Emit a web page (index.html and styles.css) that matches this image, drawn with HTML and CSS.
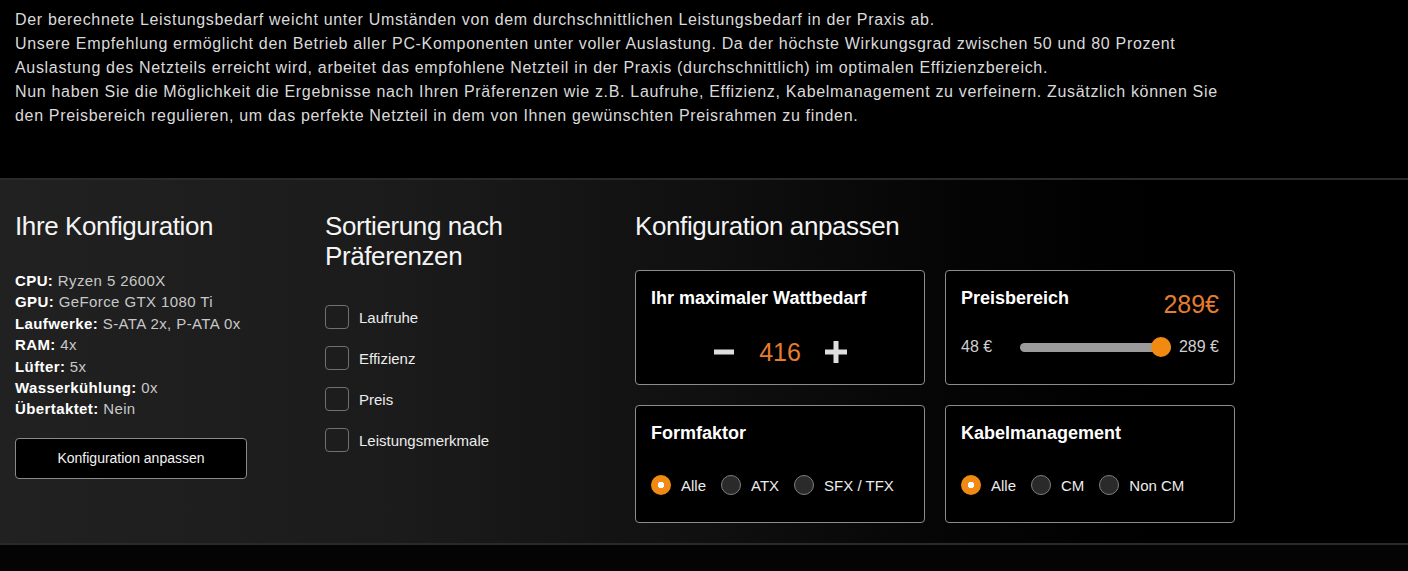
FILE: index.html
```html
<!DOCTYPE html>
<html lang="de">
<head>
    <meta charset="UTF-8">
    <meta name="viewport" content="width=device-width, initial-scale=1.0">
    <title>Netzteil-Konfigurator</title>
    <link rel="stylesheet" href="styles.css">
</head>
<body>
    <div class="intro">
        <p>Der berechnete Leistungsbedarf weicht unter Umständen von dem durchschnittlichen Leistungsbedarf in der Praxis ab.<br>
        Unsere Empfehlung ermöglicht den Betrieb aller PC-Komponenten unter voller Auslastung. Da der höchste Wirkungsgrad zwischen 50 und 80 Prozent<br>
        Auslastung des Netzteils erreicht wird, arbeitet das empfohlene Netzteil in der Praxis (durchschnittlich) im optimalen Effizienzbereich.<br>
        Nun haben Sie die Möglichkeit die Ergebnisse nach Ihren Präferenzen wie z.B. Laufruhe, Effizienz, Kabelmanagement zu verfeinern. Zusätzlich können Sie<br>
        den Preisbereich regulieren, um das perfekte Netzteil in dem von Ihnen gewünschten Preisrahmen zu finden.</p>
    </div>

    <div class="config">
        <div class="row">
            <!-- Ihre Konfiguration -->
            <div class="col col-small">
                <h2>Ihre Konfiguration</h2>
                <ul class="spec-list">
                    <li><b>CPU:</b> Ryzen 5 2600X</li>
                    <li><b>GPU:</b> GeForce GTX 1080 Ti</li>
                    <li><b>Laufwerke:</b> S-ATA 2x, P-ATA 0x</li>
                    <li><b>RAM:</b> 4x</li>
                    <li><b>Lüfter:</b> 5x</li>
                    <li><b>Wasserkühlung:</b> 0x</li>
                    <li><b>Übertaktet:</b> Nein</li>
                </ul>
                <button class="btn-outline">Konfiguration anpassen</button>
            </div>

            <!-- Sortierung -->
            <div class="col col-small">
                <h2>Sortierung nach Präferenzen</h2>
                <div class="check-list">
                    <label class="check"><span class="check-box"></span>Laufruhe</label>
                    <label class="check"><span class="check-box"></span>Effizienz</label>
                    <label class="check"><span class="check-box"></span>Preis</label>
                    <label class="check"><span class="check-box"></span>Leistungsmerkmale</label>
                </div>
            </div>

            <!-- Konfiguration anpassen -->
            <div class="col col-wide">
                <h2>Konfiguration anpassen</h2>
                <div class="cards">
                    <div class="card">
                        <div class="card-title">Ihr maximaler Wattbedarf</div>
                        <div class="stepper">
                            <svg class="step-btn" width="22" height="22" viewBox="0 0 22 22"><rect x="1" y="8.5" width="20" height="5" fill="#dedede"/></svg>
                            <span class="orange-num">416</span>
                            <svg class="step-btn" width="22" height="22" viewBox="0 0 22 22"><rect x="0" y="8.5" width="22" height="5" fill="#dedede"/><rect x="8.5" y="0" width="5" height="22" fill="#dedede"/></svg>
                        </div>
                    </div>

                    <div class="card">
                        <div class="card-head">
                            <div class="card-title">Preisbereich</div>
                            <span class="orange-num price">289€</span>
                        </div>
                        <div class="slider-row">
                            <span class="slider-label">48 €</span>
                            <div class="slider">
                                <div class="slider-track"></div>
                                <div class="slider-thumb"></div>
                            </div>
                            <span class="slider-label">289 €</span>
                        </div>
                    </div>

                    <div class="card">
                        <div class="card-title">Formfaktor</div>
                        <div class="radio-group">
                            <label class="radio"><span class="radio-dot checked"></span>Alle</label>
                            <label class="radio"><span class="radio-dot"></span>ATX</label>
                            <label class="radio"><span class="radio-dot"></span>SFX / TFX</label>
                        </div>
                    </div>

                    <div class="card">
                        <div class="card-title">Kabelmanagement</div>
                        <div class="radio-group">
                            <label class="radio"><span class="radio-dot checked"></span>Alle</label>
                            <label class="radio"><span class="radio-dot"></span>CM</label>
                            <label class="radio"><span class="radio-dot"></span>Non CM</label>
                        </div>
                    </div>
                </div>
            </div>
        </div>
    </div>
</body>
</html>
```

FILE: styles.css
```css
body { margin: 0; background: #040404; font-family: "Liberation Sans", Arial, sans-serif; color: #e6e6e6; }

.intro { background: #000; padding: 8px 15px 0; height: 170px; }
.intro p { margin: 0; font-size: 16px; line-height: 24px; color: #dadada; letter-spacing: 0.68px; }

.config { border-top: 2px solid #2a2a2a; border-bottom: 2px solid #2a2a2a; padding: 31px 0 20px;
    background: linear-gradient(to right, #212121 0, #1b1b1b 400px, #101010 700px, #050505 950px, #000 1150px); }
.row { display: flex; }
.col { box-sizing: border-box; padding: 0 15px; flex-shrink: 0; }
.col-small { width: 310px; }
.col-wide { width: 630px; padding-right: 0; }

h2 { margin: 0 0 29px; font-size: 26px; line-height: 30px; font-weight: normal; color: #f4f4f4; letter-spacing: -0.4px; }

.spec-list { list-style: none; margin: 0 0 18px; padding: 0; font-size: 15px; line-height: 21.4px; color: #c8c8c8; letter-spacing: 0.4px; }
.spec-list b { color: #fff; }

.btn-outline { display: block; width: 232px; height: 41px; background: #000; color: #f2f2f2; border: 1px solid #8a8a8a;
    border-radius: 4px; font-family: inherit; font-size: 14px; cursor: pointer; }

.check-list { margin-top: 34px; display: flex; flex-direction: column; gap: 17px; }
.check { display: flex; align-items: center; gap: 10px; font-size: 15px; color: #ececec; }
.check-box { width: 24px; height: 24px; box-sizing: border-box; border: 1px solid #707070; border-radius: 4px; background: #1d1d1d; }

.cards { display: grid; grid-template-columns: 290px 290px; grid-template-rows: 115px 118px; gap: 20px; }
.card { box-sizing: border-box; padding: 15px; border: 1px solid #8c8c8c; border-radius: 4px; background: #000; }
.card-title { font-size: 18px; line-height: 24px; font-weight: bold; color: #fff; }
.card-head { display: flex; justify-content: space-between; }

.orange-num { color: #e57c2e; font-size: 25px; }
.price { line-height: 36px; }

.stepper { display: flex; justify-content: center; align-items: center; gap: 24px; margin-top: 26px; height: 32px; }
.step-btn { display: block; }

.slider-row { display: flex; align-items: center; margin-top: 15px; height: 20px; }
.slider-label { font-size: 16px; color: #cfcfcf; }
.slider { position: relative; flex: 1; margin: 0 8px 0 28px; height: 20px; display: flex; align-items: center; }
.slider-track { width: 100%; height: 9px; border-radius: 5px; background: #9b9b9b; }
.slider-thumb { position: absolute; right: 0; top: 0; width: 20px; height: 20px; border-radius: 50%; background: #f28a12; }

.radio-group { display: flex; align-items: center; margin-top: 30px; }
.radio { display: flex; align-items: center; gap: 10px; margin-right: 15px; font-size: 15px; color: #ececec; }
.radio-dot { width: 20px; height: 20px; box-sizing: border-box; border-radius: 50%; border: 1.5px solid #7e7e7e; background: #2a2a2a; }
.radio-dot.checked { border: none; background: radial-gradient(circle, #fff 0 3px, #f08a12 3.5px); }
```
